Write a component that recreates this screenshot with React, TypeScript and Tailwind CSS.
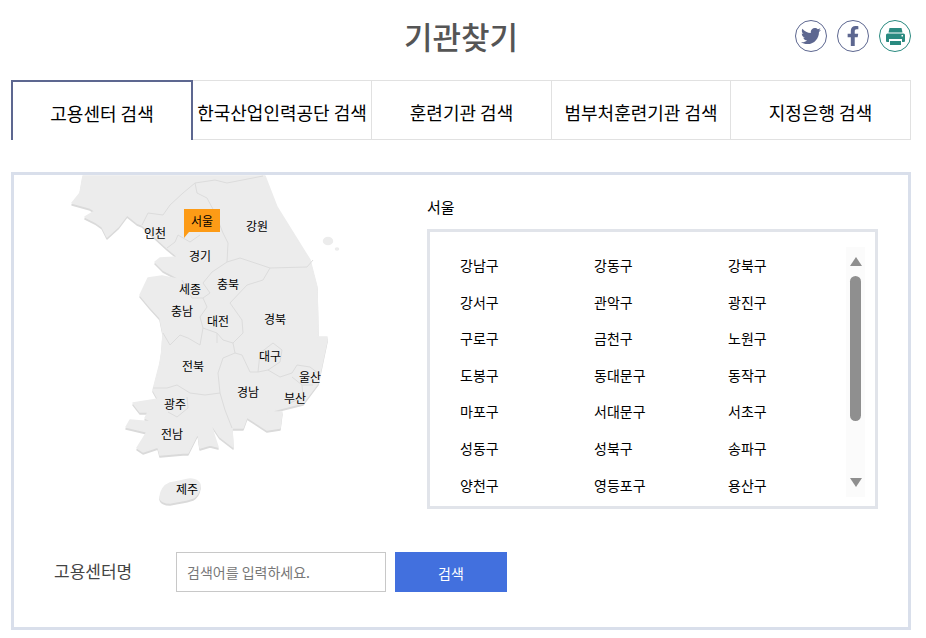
import { FaFacebookF, FaTwitter } from 'react-icons/fa';

const tabs = [
  { label: '한국산업인력공단 검색', width: 'w-[179px]' },
  { label: '훈련기관 검색', width: 'w-[180px]' },
  { label: '범부처훈련기관 검색', width: 'w-[179px]' },
  { label: '지정은행 검색', width: 'w-[180px]' },
];

const districts = [
  '강남구', '강동구', '강북구',
  '강서구', '관악구', '광진구',
  '구로구', '금천구', '노원구',
  '도봉구', '동대문구', '동작구',
  '마포구', '서대문구', '서초구',
  '성동구', '성북구', '송파구',
  '양천구', '영등포구', '용산구',
];

// label centre, in the map's own coordinates
const regions = [
  { name: '인천', x: 95, y: 58 },
  { name: '강원', x: 197, y: 51 },
  { name: '경기', x: 140, y: 81 },
  { name: '충북', x: 168, y: 109 },
  { name: '세종', x: 130, y: 114 },
  { name: '충남', x: 122, y: 136 },
  { name: '대전', x: 158, y: 146 },
  { name: '경북', x: 215, y: 144 },
  { name: '대구', x: 210, y: 181 },
  { name: '전북', x: 133, y: 191 },
  { name: '울산', x: 250, y: 202 },
  { name: '경남', x: 188, y: 217 },
  { name: '부산', x: 235, y: 223 },
  { name: '광주', x: 115, y: 229 },
  { name: '전남', x: 112, y: 259 },
  { name: '제주', x: 127, y: 314 },
];

const mainland =
  'M23 1 L20 18 L12 28 L30 33 L35 36 L25 42 L35 47 L42 52 L47 62 L58 52 L67 40 L77 48 L82 50 L107 73 L118 82 L100 83 L95 87 L103 95 L122 105 L102 101 L88 103 L80 120 L90 132 L100 143 L103 158 L102 175 L100 188 L93 215 L98 224 L73 228 L80 237 L88 237 L85 243 L93 247 L70 245 L66 252 L87 257 L77 273 L83 277 L98 272 L100 280 L123 278 L128 278 L138 258 L140 273 L150 270 L158 272 L150 247 L160 262 L173 272 L172 253 L183 253 L187 242 L207 255 L220 253 L222 237 L208 237 L223 233 L243 228 L258 208 L267 165 L267 162 L258 162 L257 112 L250 85 L217 32 L205 1 Z';

const jeju = 'M100 322 C101 314 105 310 110 308 C118 307 124 305 130 304 C137 304 141 308 140 312 C139 318 137 321 133 323 C125 326 117 326 110 328 C105 328 100 326 100 322 Z';

const borders = [
  'M82 50 L88 38 L103 40 L110 30 L123 18 L135 8 L155 5 L167 8 L203 1',
  'M135 8 L137 18 L147 23 L155 38 L163 58 L168 68 L167 87 L180 83 L210 93 L247 92 L253 85',
  'M167 87 L152 97 L143 108 L150 118 L143 123 L132 123 L122 105',
  'M107 73 L115 67 L118 60 M118 60 L130 67 L140 60',
  'M210 93 L203 105 L187 110 L170 128 L182 145 L183 158 L173 168 L175 178',
  'M143 123 L147 132 L140 142 L143 153 L157 158 L163 165 L173 168',
  'M103 158 L110 170 L120 160 L128 163 L140 170 L143 153 M157 158 L157 168',
  'M175 178 L163 183 L158 198 L160 218 L145 220 L130 218 L117 210 L107 213 L93 213',
  'M160 218 L165 235 L172 253',
  'M175 178 L182 180 L190 197 L198 197 L208 195 L220 202 L232 198 L237 190 L250 192 L258 198',
  'M198 197 L200 178 L213 168 L222 175 L220 187 L208 195',
  'M232 202 L242 210 L253 210 M242 210 L243 222 L230 228',
  'M127 222 L128 233 L117 242 L108 237',
];

function Map() {
  return (
    <div className="relative w-[398px] h-[335px] shrink-0">
      <svg className="absolute left-[60px] top-0 w-[290px] h-[335px]" viewBox="0 0 290 335">
        <g fill="#dadada" stroke="#dadada" strokeWidth="1.500" strokeLinejoin="round" transform="translate(0 2)">
          <path d={mainland} />
          <path d={jeju} />
        </g>
        <g fill="#ececec" stroke="#ececec" strokeWidth="1.500" strokeLinejoin="round">
          <path d={mainland} />
          <path d={jeju} />
          <ellipse cx="268" cy="66" rx="4.500" ry="3.500" />
          <ellipse cx="277" cy="74" rx="1.500" ry="1" />
        </g>
        <g fill="none" stroke="#dcdcdc" strokeWidth="1" strokeLinejoin="round">
          {borders.map((d) => (
            <path key={d} d={d} />
          ))}
        </g>
      </svg>
      {regions.map((r) => (
        <span
          key={r.name}
          className="absolute -translate-x-1/2 -translate-y-1/2 text-[12px] leading-none text-black whitespace-nowrap"
          style={{ left: r.x + 60, top: r.y }}
        >
          {r.name}
        </span>
      ))}
      <div className="absolute left-[184px] top-[34px] w-[36px] h-[23px] bg-[#fd9b16] flex items-center justify-center text-[12px] text-black">
        서울
        <span className="absolute left-0 top-full border-t-[6px] border-r-[5px] border-t-[#fd9b16] border-r-transparent" />
      </div>
    </div>
  );
}

function SocialIcons() {
  return (
    <div className="absolute right-[15px] top-[20px] flex gap-[10px]">
      <a className="w-[32px] h-[32px] rounded-full border border-[#5d6790] flex items-center justify-center text-[#5d6790]">
        <FaTwitter size={20} />
      </a>
      <a className="w-[32px] h-[32px] rounded-full border border-[#5d6790] flex items-center justify-center text-[#5d6790]">
        <FaFacebookF size={20} />
      </a>
      <a className="w-[32px] h-[32px] rounded-full border border-[#2a8a80] flex items-center justify-center">
        <svg width="19" height="17" viewBox="0 0 19 17" fill="#2a8a80">
          <path d="M3.500 0h12l1 4.500h-14z" />
          <path d="M1.500 5.500h16a1.500 1.500 0 0 1 1.500 1.500v6a1 1 0 0 1-1 1h-2v-3H3v3H1a1 1 0 0 1-1-1V7a1.500 1.500 0 0 1 1.500-1.500z" />
          <path d="M4 13h11v4H4z" />
          <path d="M15.500 7h1.500v1.500h-1.500z" fill="#fff" />
        </svg>
      </a>
    </div>
  );
}

export default function App() {
  return (
    <div className="w-[926px] h-[638px] bg-white overflow-hidden pl-[11px] pr-[15px] font-['Noto_Sans_CJK_KR','Noto_Sans',sans-serif]">
      <header className="h-[80px] flex items-center justify-center">
        <h1 className="text-[31px] font-medium text-[#555] leading-none pb-[10px]">기관찾기</h1>
        <SocialIcons />
      </header>

      <ul className="flex h-[60px]">
        <li className="w-[182px] border-t-2 border-x-2 border-[#5d6790] flex items-center justify-center pt-[4px] text-[18px] text-black">
          고용센터 검색
        </li>
        {tabs.map((tab) => (
          <li
            key={tab.label}
            className={`${tab.width} border border-l-0 border-[#e1e1e1] flex items-center justify-center pt-[5px] text-[18px] text-black whitespace-nowrap`}
          >
            {tab.label}
          </li>
        ))}
      </ul>

      <section className="mt-[32px] h-[458px] border-[3px] border-[#d9dfeb]">
        <div className="flex h-[335px]">
          <div className="-ml-[14px]">
            <Map />
          </div>
          <div className="pl-[29px] w-[451px] box-content">
            <h2 className="text-[15px] leading-none text-black pt-[24px] h-[54px]">서울</h2>
            <div className="relative w-[451px] h-[280px] border-[3px] border-[#e1e4ea]">
              <ul className="grid grid-cols-[134px_134px_100px] auto-rows-[36.6px] pl-[30px] pt-[15px] h-full overflow-hidden">
                {districts.map((d) => (
                  <li key={d} className="text-[14px] text-black leading-[36.6px]">
                    {d}
                  </li>
                ))}
              </ul>
              <div className="absolute left-[416px] top-[15px] w-[19px] h-[250px] bg-[#fbfbfb] flex flex-col items-center">
                <span className="mt-[10px] border-x-[6.5px] border-b-[9px] border-x-transparent border-b-[#8f8f8f]" />
                <span className="mt-[10px] w-[11px] h-[145px] rounded-full bg-[#8f8f8f]" />
                <span className="mt-[57px] border-x-[6.5px] border-t-[9px] border-x-transparent border-t-[#8f8f8f]" />
              </div>
            </div>
          </div>
        </div>

        <div className="flex items-center mt-[42px] pl-[40px]">
          <label className="w-[122px] text-[17px] text-[#444] pb-[3px]">고용센터명</label>
          <input
            placeholder="검색어를 입력하세요."
            className="w-[210px] h-[40px] border border-[#c8c8c8] px-[10px] text-[14px] placeholder:text-[#777] outline-none"
          />
          <button className="ml-[9px] w-[112px] h-[40px] bg-[#4270de] text-white text-[14px] pt-[3px]">검색</button>
        </div>
      </section>
    </div>
  );
}
